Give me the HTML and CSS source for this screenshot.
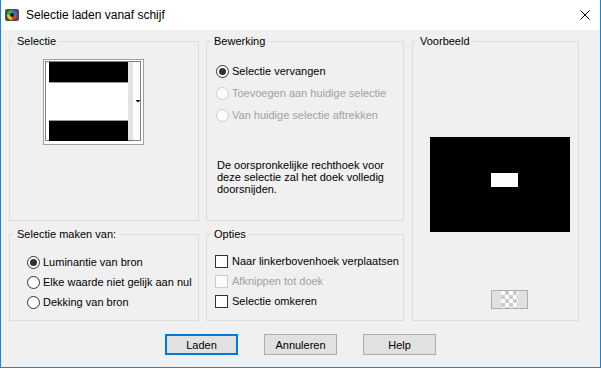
FILE: index.html
```html
<!DOCTYPE html>
<html lang="nl">
<head>
  <meta charset="UTF-8">
  <title>Selectie laden vanaf schijf</title>
  <link rel="stylesheet" href="styles.css">
</head>
<body>

<div class="window">
  <!-- TITELBALK -->
  <div class="titlebar">
    <svg class="app-icon" viewBox="0 0 14 14">
      <rect x="0" y="1" width="14" height="12" rx="2" fill="#4a4d52"/>
      <circle cx="7" cy="7" r="3.6" fill="none" stroke="#e33b2e" stroke-width="3" stroke-dasharray="5.6 17"/>
      <circle cx="7" cy="7" r="3.6" fill="none" stroke="#f2c51c" stroke-width="3" stroke-dasharray="5.6 17" stroke-dashoffset="-5.6"/>
      <circle cx="7" cy="7" r="3.6" fill="none" stroke="#3cb043" stroke-width="3" stroke-dasharray="5.6 17" stroke-dashoffset="-11.2"/>
      <circle cx="7" cy="7" r="3.6" fill="none" stroke="#2f6fe0" stroke-width="3" stroke-dasharray="5.6 17" stroke-dashoffset="-16.8"/>
      <circle cx="7" cy="7" r="1.8" fill="#111"/>
    </svg>
    <span class="title">Selectie laden vanaf schijf</span>
    <svg class="close" viewBox="0 0 10 10">
      <path d="M0.5 0.5 L9.5 9.5 M9.5 0.5 L0.5 9.5" stroke="#000" stroke-width="1" fill="none"/>
    </svg>
  </div>

  <div class="content">
    <div class="panels">

      <!-- SELECTIE -->
      <fieldset class="group sel">
        <legend>Selectie</legend>
        <div class="thumb">
          <svg width="99" height="84" viewBox="0 0 99 84">
            <rect x="0" y="0" width="99" height="84" fill="#fff"/>
            <rect x="5" y="2" width="79" height="20" fill="#000"/>
            <rect x="5" y="22" width="79" height="1" fill="#9a9a9a"/>
            <rect x="5" y="60" width="79" height="1" fill="#9a9a9a"/>
            <rect x="5" y="61" width="79" height="20" fill="#000"/>
            <rect x="84" y="2" width="5" height="79" fill="#e3e3e3"/>
            <polygon points="91.5,40 96.5,40 94,42.5" fill="#000"/>
            <rect x="1.5" y="1.5" width="95" height="79" fill="none" stroke="#000" stroke-width="1" stroke-dasharray="1 1"/>
          </svg>
        </div>
      </fieldset>

      <!-- BEWERKING -->
      <fieldset class="group bew">
        <legend>Bewerking</legend>
        <div class="options bew-list">
          <div class="option"><span class="radio checked"></span>Selectie vervangen</div>
          <div class="option disabled"><span class="radio"></span>Toevoegen aan huidige selectie</div>
          <div class="option disabled"><span class="radio"></span>Van huidige selectie aftrekken</div>
        </div>
        <p class="note">De oorspronkelijke rechthoek voor deze selectie zal het doek volledig doorsnijden.</p>
      </fieldset>

      <!-- VOORBEELD -->
      <fieldset class="group pre">
        <legend>Voorbeeld</legend>
        <svg class="preview" width="140" height="95" viewBox="0 0 140 95">
          <rect x="0" y="0" width="140" height="95" fill="#000"/>
          <rect x="61" y="36" width="27" height="14" fill="#fff"/>
        </svg>
        <div class="bg-button"><span class="checker"></span></div>
      </fieldset>

      <!-- SELECTIE MAKEN VAN -->
      <fieldset class="group src">
        <legend>Selectie maken van:</legend>
        <div class="options src-list">
          <div class="option"><span class="radio checked"></span>Luminantie van bron</div>
          <div class="option"><span class="radio"></span>Elke waarde niet gelijk aan nul</div>
          <div class="option"><span class="radio"></span>Dekking van bron</div>
        </div>
      </fieldset>

      <!-- OPTIES -->
      <fieldset class="group opt">
        <legend>Opties</legend>
        <div class="options opt-list">
          <div class="option check"><span class="box"></span>Naar linkerbovenhoek verplaatsen</div>
          <div class="option check disabled"><span class="box"></span>Afknippen tot doek</div>
          <div class="option check"><span class="box"></span>Selectie omkeren</div>
        </div>
      </fieldset>

    </div>

    <div class="buttons">
      <button class="btn default">Laden</button>
      <button class="btn">Annuleren</button>
      <button class="btn">Help</button>
    </div>
  </div>
</div>

</body>
</html>
```

FILE: styles.css
```css
* { margin: 0; padding: 0; box-sizing: border-box; }

html { background: #fff; }

body {
  font-family: 'Liberation Sans', Arial, sans-serif;
  font-size: 11px;
  line-height: 13px;
  color: #000;
}

.window {
  width: 601px;
  height: 368px;
  background: #f0f0f0;
  border: 1px solid #1883d7;
  border-top: none;
}

/* titelbalk */
.titlebar {
  height: 30px;
  background: #fff;
  display: flex;
  align-items: center;
  padding-left: 4px;
}

.app-icon { width: 14px; height: 14px; margin-right: 7px; }
.title { font-size: 12px; }
.close { width: 10px; height: 10px; margin-left: auto; margin-right: 10px; }

/* panelen */
.content { padding: 5px 0 0 8px; }

.panels {
  display: grid;
  grid-template-columns: 190px 198px 168px;
  grid-template-rows: 186px 93px;
  grid-template-areas:
    "sel bew pre"
    "src opt pre";
  column-gap: 7px;
  row-gap: 7px;
}

.group {
  border: 1px solid #dcdcdc;
  min-width: 0;
}

.group legend {
  margin-left: 3px;
  padding: 0 3px 0 4px;
  line-height: 13px;
}

.sel { grid-area: sel; }
.bew { grid-area: bew; }
.pre { grid-area: pre; margin-left: 1px; }
.src { grid-area: src; }
.opt { grid-area: opt; }

.thumb {
  margin: 11px 0 0 33px;
  width: 101px;
  height: 86px;
  border: 1px solid #a0a0a0;
  background: #fff;
}

.thumb svg { display: block; }

/* keuzerondjes en vakjes */
.options { display: flex; flex-direction: column; }
.bew-list { padding: 17px 0 0 9px; gap: 9px; }
.src-list { padding: 15px 0 0 17px; gap: 7px; }
.opt-list { padding: 14px 0 0 8px; gap: 7px; }

.option {
  display: flex;
  align-items: center;
  height: 13px;
  gap: 3px;
  white-space: nowrap;
}

.option.check { gap: 4px; }
.option.disabled { color: #a0a0a0; }

.radio, .box {
  flex: none;
  width: 13px;
  height: 13px;
  border: 1px solid #333;
  background: #fff;
  display: flex;
  align-items: center;
  justify-content: center;
}

.radio { border-radius: 50%; }

.radio.checked::after {
  content: "";
  width: 7px;
  height: 7px;
  border-radius: 50%;
  background: #333;
}

.disabled .radio, .disabled .box {
  border-color: #cccccc;
  background: #fcfcfc;
}

.note {
  margin: 37px 0 0 10px;
  width: 180px;
  line-height: 12px;
}

/* voorbeeld */
.preview { display: block; margin: 89px 0 0 17px; }

.bg-button {
  margin: 58px 0 0 78px;
  width: 37px;
  height: 19px;
  border: 1px solid #adadad;
  background: #e1e1e1;
  display: flex;
  justify-content: center;
}

.checker {
  width: 17px;
  height: 17px;
  background: repeating-conic-gradient(#cccccc 0 25%, #fff 0 50%) 0 0 / 8px 8px;
}

/* knoppen */
.buttons {
  margin-top: 13px;
  margin-left: -8px;
  display: flex;
  justify-content: center;
  gap: 26px;
}

.btn {
  width: 73px;
  height: 21px;
  font-family: inherit;
  font-size: 11px;
  color: #000;
  background: #e1e1e1;
  border: 1px solid #adadad;
}

.btn.default { border: 2px solid #0078d7; }
```
